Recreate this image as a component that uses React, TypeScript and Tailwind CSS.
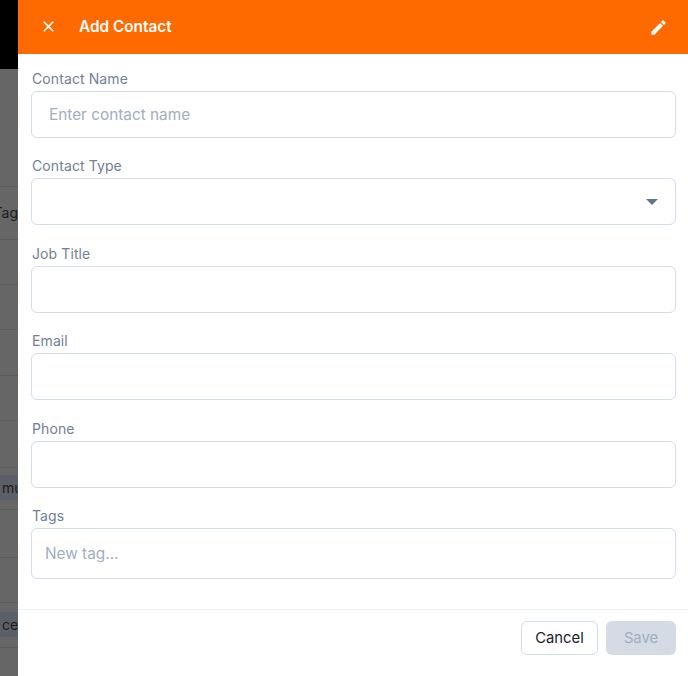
import { X } from "lucide-react";

const rowLine = "shrink-0 border-b border-[#5c5c5c]";
const labelText = "h-[22px] pl-px text-sm leading-[20px] tracking-[0.1px] text-[#718096]";

function Field({ label, placeholder, select }: { label: string; placeholder?: string; select?: boolean }) {
  return (
    <div className="flex flex-col">
      <label className={labelText}>{label}</label>
      <div className="flex h-[47px] items-center justify-between rounded-md border border-[#d3dce9] bg-white pl-[17px] pr-4">
        <span className="pt-0.5 text-[15.35px] text-[#a0aec0]">{placeholder}</span>
        {select && <span className="mr-px h-0 w-0 border-x-[6px] border-t-[6px] border-x-transparent border-t-[#64748b]" />}
      </div>
    </div>
  );
}

export default function App() {
  return (
    <div className="flex h-[676px] w-[688px] overflow-hidden bg-[#666666] font-['Inter',sans-serif]">
      <div className="flex w-[18px] shrink-0 flex-col overflow-hidden text-sm text-[#1c1c1c]">
        <div className="h-[69px] shrink-0 bg-black" />
        <div className={`h-[118px] ${rowLine}`} />
        <div className={`flex h-[53px] items-center justify-end ${rowLine}`}>
          <span className="whitespace-nowrap">Tag</span>
        </div>
        <div className={`h-[45px] ${rowLine}`} />
        <div className={`h-[45px] ${rowLine}`} />
        <div className={`h-[46px] ${rowLine}`} />
        <div className={`h-[45px] ${rowLine}`} />
        <div className={`h-[47px] ${rowLine}`} />
        <div className={`h-[42px] pt-[7px] ${rowLine}`}>
          <div className="flex h-[25px] items-center bg-[#5b6068] pl-0.5">mu</div>
        </div>
        <div className={`h-[48px] ${rowLine}`} />
        <div className={`h-[45px] ${rowLine}`} />
        <div className={`h-[45px] pt-[9px] ${rowLine}`}>
          <div className="flex h-[25px] items-center bg-[#5b6068] pl-0.5">ce</div>
        </div>
      </div>
      <div className="flex min-w-0 flex-1 flex-col bg-white">
        <header className="flex h-[54px] shrink-0 items-center justify-between bg-[#ff6a00] pl-[22px] pr-5 text-white">
          <div className="flex items-center gap-[22px]">
            <X size={17} strokeWidth={2.4} />
            <h1 className="text-[15.35px] font-semibold">Add Contact</h1>
          </div>
          <svg width="19" height="19" viewBox="0 0 24 24" fill="currentColor">
            <path d="M3 17.25V21h3.75L17.81 9.94l-3.75-3.75L3 17.25zM20.71 7.04c.39-.39.39-1.02 0-1.41l-2.34-2.34c-.39-.39-1.02-.39-1.41 0l-1.83 1.83 3.75 3.75 1.83-1.83z" />
          </svg>
        </header>
        <div className="flex flex-1 flex-col gap-[18.5px] pl-[13px] pr-3 pt-[14.5px]">
          <Field label="Contact Name" placeholder="Enter contact name" />
          <Field label="Contact Type" select />
          <Field label="Job Title" />
          <Field label="Email" />
          <Field label="Phone" />
          <div className="flex flex-col">
            <label className={labelText}>Tags</label>
            <div className="flex h-[51px] items-center rounded-md border border-[#d3dce9] bg-white pl-[13px]">
              <span className="text-[15.35px] text-[#a0aec0]">New tag...</span>
            </div>
          </div>
        </div>
        <footer className="flex h-[67px] shrink-0 items-start justify-end gap-2 border-t border-[#edf0f4] pr-3 pt-[11px]">
          <button className="h-[34px] w-[77px] rounded-md border border-[#d3dce9] bg-white text-[14.8px] text-[#1a202c]">Cancel</button>
          <button className="h-[34px] w-[70px] rounded-md bg-[#d5dbe5] text-[14.8px] text-[#a0aec0]">Save</button>
        </footer>
      </div>
    </div>
  );
}
